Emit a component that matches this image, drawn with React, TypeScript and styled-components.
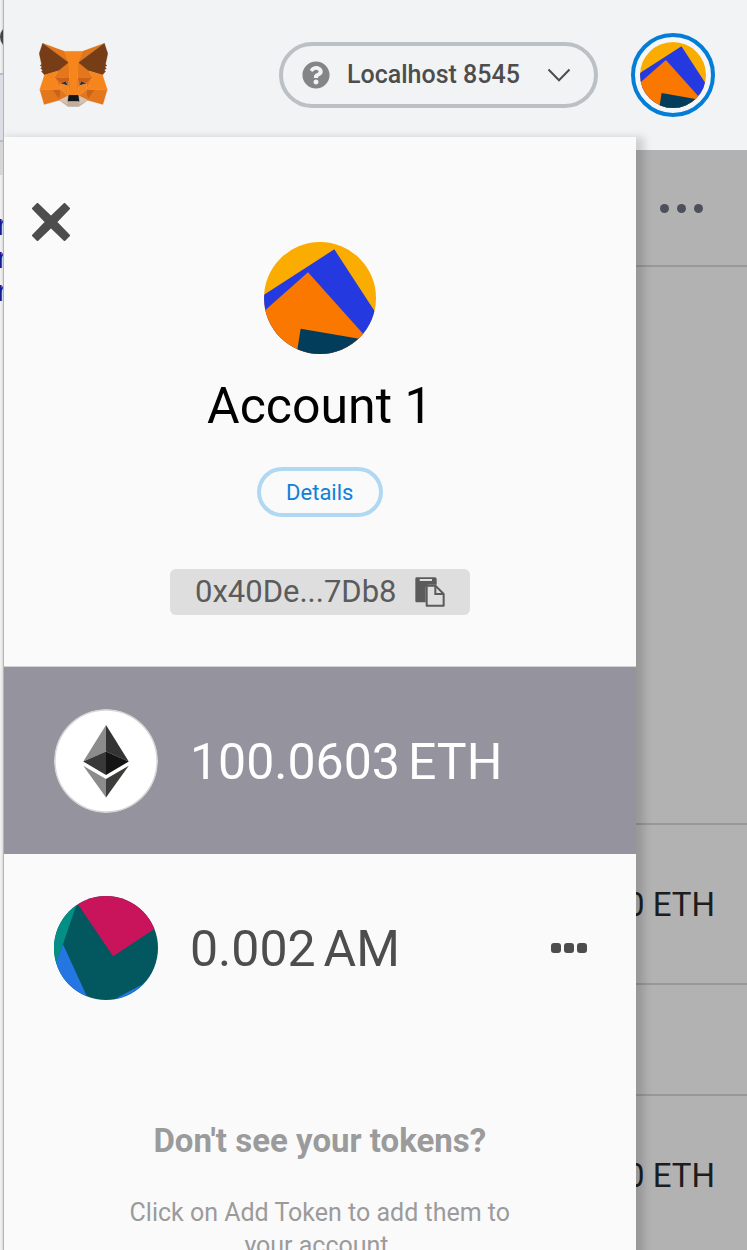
import React from "react";
import styled, { createGlobalStyle } from "styled-components";
import { FaQuestionCircle } from "react-icons/fa";

const GlobalStyle = createGlobalStyle`
  *, *::before, *::after { box-sizing: border-box; }
  body { margin: 0; background: #fff; font-family: Roboto, "Liberation Sans", sans-serif; }
  button { font-family: inherit; cursor: pointer; }
`;

const Window = styled.div`
  display: flex;
  height: 100vh;
  overflow: hidden;
`;

/* Sliver of the editor page behind the extension window */
const EditorEdge = styled.aside`
  display: flex;
  flex-direction: column;
  flex: none;
  width: 4px;
  overflow: hidden;
  background: linear-gradient(to right, #f4f4f4, #dedede);
  border-right: 1px solid #b4b4b4;
`;

const EdgeBand = styled.div<{ $height: number; $color?: string; $line?: boolean }>`
  display: flex;
  align-items: center;
  flex: none;
  height: ${(p) => p.$height}px;
  background: ${(p) => p.$color ?? "transparent"};
  border-bottom: ${(p) => (p.$line ? "2px solid #b9bac4" : "none")};
`;

const EdgeDot = styled.span`
  flex: none;
  width: 24px;
  height: 24px;
  border-radius: 50%;
  background: #454545;
`;

const EdgeCode = styled.code`
  margin-left: -3px;
  padding-top: 33px;
  font: 30px/33px "Liberation Sans", sans-serif;
  color: #1a1a96;
  white-space: pre;
`;

const Popup = styled.div`
  position: relative;
  display: flex;
  flex-direction: column;
  flex: 1;
  min-width: 0;
  overflow: hidden;
`;

const Header = styled.header`
  display: flex;
  align-items: center;
  flex: none;
  height: 150px;
  padding: 0 32px 0 35px;
  background: #f1f3f5;
`;

const Logo = styled.svg`
  width: 69px;
  height: 64px;
`;

const NetworkButton = styled.button`
  display: flex;
  align-items: center;
  width: 319px;
  height: 66px;
  margin: 0 33px 0 auto;
  padding: 0 23px 0 19px;
  border: 4px solid #bbc0c5;
  border-radius: 33px;
  background: none;
  color: #4d4d4d;
  font-size: 25px;
  font-weight: 500;
  line-height: 32px;
`;

const NetworkIcon = styled(FaQuestionCircle)`
  width: 28px;
  height: 28px;
  color: #848587;
`;

const NetworkName = styled.span`
  flex: 1;
  padding-left: 17px;
  text-align: left;
`;

const Chevron = styled.svg`
  width: 24px;
  height: 14px;
`;

const AccountButton = styled.button`
  display: flex;
  width: 84px;
  height: 84px;
  padding: 5px;
  border: 4px solid #037dd6;
  border-radius: 50%;
  background: #f5f6f8;
`;

const Identicon = styled.svg<{ $size: number }>`
  flex: none;
  display: block;
  width: ${(p) => p.$size}px;
  height: ${(p) => p.$size}px;
  border-radius: 50%;
`;

const Wallet = styled.main`
  display: flex;
  flex-direction: column;
  flex: 1;
  background: #b2b2b2;
  color: #1b1d1f;
`;

const WalletRow = styled.div<{ $height: number }>`
  display: flex;
  align-items: center;
  justify-content: flex-end;
  flex: none;
  height: ${(p) => p.$height}px;
  padding: 2px 32px 0 0;
  border-bottom: 2px solid #96999c;
  font-size: 33px;
  line-height: 40px;
`;

const OptionsButton = styled.button`
  display: flex;
  gap: 8px;
  padding: 12px;
  border: 0;
  background: none;
`;

const RoundDot = styled.span`
  width: 9px;
  height: 9px;
  border-radius: 50%;
  background: #4c505a;
`;

const Drawer = styled.section`
  position: absolute;
  top: 137px;
  bottom: 0;
  left: 0;
  width: 85%;
  overflow: hidden;
  background: #fafafa;
  box-shadow: 4px 4px 8px 4px rgba(0, 0, 0, 0.15);
`;

const Profile = styled.div`
  display: flex;
  flex-direction: column;
  align-items: center;
  height: 530px;
  padding-top: 66px;
  border-bottom: 1px solid #d2d2d4;
`;

const CloseButton = styled.button`
  display: flex;
  align-self: flex-start;
  margin: 0 0 1px 28px;
  padding: 0;
  border: 0;
  background: none;
`;

const AccountName = styled.h1`
  margin: 22px 0 31px;
  color: #000;
  font-size: 50px;
  font-weight: 400;
  line-height: 60px;
`;

const DetailsButton = styled.button`
  width: 126px;
  height: 50px;
  padding: 2px 0 0;
  border: 4px solid #b0d8f3;
  border-radius: 25px;
  background: none;
  color: #1080d8;
  font-size: 22px;
  line-height: 28px;
`;

const AddressButton = styled.button`
  display: flex;
  align-items: center;
  justify-content: center;
  gap: 18px;
  width: 300px;
  height: 46px;
  margin-top: 52px;
  padding: 0;
  border: 0;
  border-radius: 6px;
  background: #dedede;
  color: #5b5b5b;
  font-size: 31px;
  line-height: 36px;
`;

const AssetList = styled.ul`
  margin: 0;
  padding: 0;
  list-style: none;
`;

const Asset = styled.li<{ $selected?: boolean }>`
  display: flex;
  align-items: center;
  height: 187px;
  padding: 0 47px 0 50px;
  background: ${(p) => (p.$selected ? "#94939e" : "transparent")};
  color: ${(p) => (p.$selected ? "#fff" : "#4d4d4d")};
`;

const Balance = styled.div`
  display: flex;
  flex: 1;
  gap: 8px;
  padding: 2px 0 0 32px;
  font-size: 50px;
  line-height: 60px;
`;

const TokenMenuButton = styled.button`
  display: flex;
  gap: 3px;
  padding: 2px;
  border: 0;
  background: none;
`;

const SquareDot = styled.span`
  width: 10px;
  height: 10px;
  border-radius: 3px;
  background: #4d4d4d;
`;

const TokenHelp = styled.div`
  display: flex;
  flex-direction: column;
  align-items: center;
  padding-top: 80px;
  color: #9b9b9b;
  text-align: center;
`;

const HelpTitle = styled.h2`
  margin: 0;
  font-size: 33px;
  font-weight: 700;
  line-height: 40px;
`;

const HelpText = styled.p`
  max-width: 400px;
  margin: 35px 0 0;
  font-size: 25px;
  line-height: 33px;
`;

const foxShapes: [string, string][] = [
  ["#e2761b", "274.1,35.5 174.6,109.4 193,65.8"],
  ["#e4761b", "44.4,35.5 143.1,110.1 125.6,65.8"],
  ["#e4761b", "238.3,206.8 211.8,247.4 268.5,263 284.8,207.7"],
  ["#e4761b", "33.9,207.7 50.1,263 106.8,247.4 80.3,206.8"],
  ["#e4761b", "103.6,138.2 87.8,162.1 144.1,164.6 142.1,104.1"],
  ["#e4761b", "214.9,138.2 175.9,103.4 174.6,164.6 230.8,162.1"],
  ["#e4761b", "106.8,247.4 140.6,230.9 111.4,208.1"],
  ["#e4761b", "177.9,230.9 211.8,247.4 207.1,208.1"],
  ["#d7c1b3", "211.8,247.4 177.9,230.9 180.6,253 180.3,262.3"],
  ["#d7c1b3", "106.8,247.4 138.3,262.3 138.1,253 140.6,230.9"],
  ["#233447", "138.8,193.5 110.6,185.2 130.5,176.1"],
  ["#233447", "179.7,193.5 188,176.1 208,185.2"],
  ["#cd6116", "106.8,247.4 111.6,206.8 80.3,207.7"],
  ["#cd6116", "207,206.8 211.8,247.4 238.3,207.7"],
  ["#cd6116", "230.8,162.1 174.6,164.6 179.8,193.5 188.1,176.1 208.1,185.2"],
  ["#cd6116", "110.6,185.2 130.6,176.1 138.8,193.5 144.1,164.6 87.8,162.1"],
  ["#e4751f", "87.8,162.1 111.4,208.1 110.6,185.2"],
  ["#e4751f", "208.1,185.2 207.1,208.1 230.8,162.1"],
  ["#e4751f", "144.1,164.6 138.8,193.5 145.4,227.6 146.9,182.7"],
  ["#e4751f", "174.6,164.6 171.9,182.6 173.1,227.6 179.8,193.5"],
  ["#f6851b", "179.8,193.5 173.1,227.6 177.9,230.9 207.1,208.1 208.1,185.2"],
  ["#f6851b", "110.6,185.2 111.4,208.1 140.6,230.9 145.4,227.6 138.8,193.5"],
  ["#c0ad9e", "180.3,262.3 180.6,253 178.1,250.8 140.4,250.8 138.1,253 138.3,262.3 106.8,247.4 117.8,256.4 140.1,271.9 178.4,271.9 200.8,256.4 211.8,247.4"],
  ["#161616", "177.9,230.9 173.1,227.6 145.4,227.6 140.6,230.9 138.1,253 140.4,250.8 178.1,250.8 180.6,253"],
  ["#763d16", "278.3,114.2 286.8,73.4 274.1,35.5 177.9,106.9 214.9,138.2 267.2,153.5 278.8,140 273.8,136.4 281.8,129.1 275.6,124.3 283.6,118.2"],
  ["#763d16", "31.8,73.4 40.3,114.2 34.9,118.2 42.9,124.3 36.8,129.1 44.8,136.4 39.8,140 51.3,153.5 103.6,138.2 140.6,106.9 44.4,35.5"],
  ["#f6851b", "267.2,153.5 214.9,138.2 230.8,162.1 207.1,208.1 238.3,207.7 284.8,207.7"],
  ["#f6851b", "103.6,138.2 51.3,153.5 33.9,207.7 80.3,207.7 111.4,208.1 87.8,162.1"],
  ["#f6851b", "174.6,164.6 177.9,106.9 193.1,65.8 125.6,65.8 140.6,106.9 144.1,164.6 145.3,182.8 145.4,227.6 173.1,227.6 173.3,182.8"],
];

const FoxLogo = () => (
  <Logo viewBox="31 35 256.5 237.5" role="img" aria-label="MetaMask">
    {foxShapes.map(([color, points], i) => (
      <polygon key={i} points={points} fill={color} stroke={color} strokeWidth="1" strokeLinejoin="round" />
    ))}
  </Logo>
);

const AccountIdenticon = ({ size }: { size: number }) => (
  <Identicon $size={size} viewBox="0 0 336 336" aria-hidden="true">
    <rect width="336" height="336" fill="#faac00" />
    <polygon points="211,22 336,214 336,336 0,336 0,158" fill="#243ae0" />
    <polygon points="132,91 352,337 0,337 0,208" fill="#fa7700" />
    <polygon points="110,260 290,291 290,336 98,336" fill="#023d5b" />
  </Identicon>
);

const TokenIdenticon = () => (
  <Identicon $size={104} viewBox="0 0 313 313" aria-hidden="true">
    <rect width="313" height="313" fill="#03585f" />
    <polygon points="0,0 78,0 66,31 27,145 0,225" fill="#038e86" />
    <polygon points="27,145 112,330 0,330 0,220" fill="#2476e3" />
    <polygon points="170,317 285,256 313,313" fill="#2476e3" />
    <polygon points="55,0 73,26 178,181 313,92 313,0" fill="#c9145c" />
  </Identicon>
);

const EtherIcon = () => (
  <Identicon $size={104} viewBox="0 0 313 313" aria-hidden="true">
    <circle cx="156.5" cy="156.5" r="154" fill="#fff" stroke="#d6d6d6" strokeWidth="5" />
    <polygon points="156.5,48 156.5,128 88,158" fill="#8c8c8c" />
    <polygon points="156.5,48 225,158 156.5,128" fill="#343434" />
    <polygon points="88,158 156.5,128 156.5,199" fill="#393939" />
    <polygon points="225,158 156.5,128 156.5,199" fill="#141414" />
    <polygon points="88,171 156.5,211 156.5,266" fill="#8c8c8c" />
    <polygon points="225,171 156.5,211 156.5,266" fill="#3c3c3b" />
  </Identicon>
);

const CopyIcon = () => (
  <svg width="30" height="30" viewBox="0 0 90 90" aria-hidden="true">
    <path d="M5 1h55q5 0 5 5v17H39q-7 0-7 7v46H5q-4 0-4-4V5q0-4 4-4z" fill="#5b5b5b" />
    <path d="M14 6h37v6H14z" fill="#dedede" />
    <path d="M35 26h26l25 25v35H35z" fill="#dedede" stroke="#5b5b5b" strokeWidth="6" strokeLinejoin="round" />
    <path d="M61 26v25h25" fill="none" stroke="#5b5b5b" strokeWidth="6" />
  </svg>
);

export default function App() {
  return (
    <>
      <GlobalStyle />
      <Window>
        <EditorEdge aria-hidden="true">
          <EdgeBand $height={75} $line>
            <EdgeDot />
          </EdgeBand>
          <EdgeBand $height={67} $color="#dcdde5" $line />
          <EdgeBand $height={33} $color="#d6d6d6" />
          <EdgeCode>{"r\nr\nr"}</EdgeCode>
        </EditorEdge>
        <Popup>
          <Header>
            <FoxLogo />
            <NetworkButton type="button">
              <NetworkIcon aria-hidden="true" />
              <NetworkName>Localhost 8545</NetworkName>
              <Chevron viewBox="0 0 24 14" aria-hidden="true">
                <path d="M1.5 1.5 12 12.2 22.5 1.5" fill="none" stroke="#4d4d4d" strokeWidth="2" />
              </Chevron>
            </NetworkButton>
            <AccountButton type="button" aria-label="My accounts">
              <AccountIdenticon size={66} />
            </AccountButton>
          </Header>
          <Wallet>
            <WalletRow $height={117}>
              <OptionsButton type="button" aria-label="Account options">
                <RoundDot />
                <RoundDot />
                <RoundDot />
              </OptionsButton>
            </WalletRow>
            <WalletRow $height={558} />
            <WalletRow $height={160}>0 ETH</WalletRow>
            <WalletRow $height={111} />
            <WalletRow $height={160}>0 ETH</WalletRow>
          </Wallet>
          <Drawer aria-label="Account menu">
            <Profile>
              <CloseButton type="button" aria-label="Close">
                <svg width="38" height="38" viewBox="0 0 38 38" aria-hidden="true">
                  <path
                    d="M5.500 1 19 14 32.500 1 37 5.500 24 19 37 32.500 32.500 37 19 24 5.500 37 1 32.500 14 19 1 5.500z"
                    fill="#4d4d4d"
                    stroke="#4d4d4d"
                    strokeWidth="2"
                    strokeLinejoin="round"
                  />
                </svg>
              </CloseButton>
              <AccountIdenticon size={112} />
              <AccountName>Account 1</AccountName>
              <DetailsButton type="button">Details</DetailsButton>
              <AddressButton type="button">
                0x40De...7Db8
                <CopyIcon />
              </AddressButton>
            </Profile>
            <AssetList>
              <Asset $selected>
                <EtherIcon />
                <Balance>
                  <span>100.0603</span>
                  <span>ETH</span>
                </Balance>
              </Asset>
              <Asset>
                <TokenIdenticon />
                <Balance>
                  <span>0.002</span>
                  <span>AM</span>
                </Balance>
                <TokenMenuButton type="button" aria-label="Token options">
                  <SquareDot />
                  <SquareDot />
                  <SquareDot />
                </TokenMenuButton>
              </Asset>
            </AssetList>
            <TokenHelp>
              <HelpTitle>Don't see your tokens?</HelpTitle>
              <HelpText>Click on Add Token to add them to your account.</HelpText>
            </TokenHelp>
          </Drawer>
        </Popup>
      </Window>
    </>
  );
}
